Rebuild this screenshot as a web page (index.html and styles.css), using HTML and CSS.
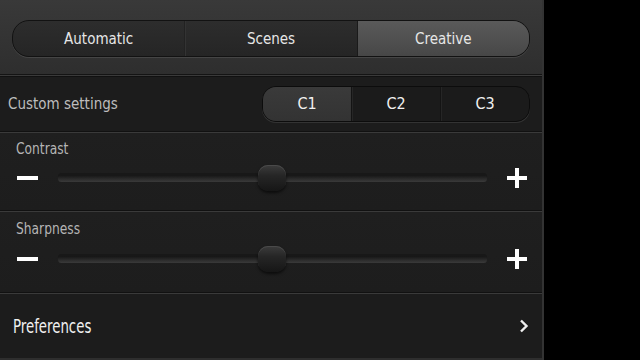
FILE: index.html
```html
<!DOCTYPE html>
<html>
<head>
<meta charset="utf-8">
<link rel="stylesheet" href="styles.css">
</head>
<body>
<div class="screen">
  <div class="panel">
    <div class="top">
      <div class="seg seg-main">
        <div class="seg-item">Automatic</div>
        <div class="seg-item">Scenes</div>
        <div class="seg-item active">Creative</div>
      </div>
    </div>
    <div class="row custom">
      <span class="label">Custom settings</span>
      <div class="seg seg-small">
        <div class="seg-item active">C1</div>
        <div class="seg-item">C2</div>
        <div class="seg-item">C3</div>
      </div>
    </div>
    <div class="slider-block first">
      <div class="slider-label"><span class="narrow">Contrast</span></div>
      <div class="slider-row">
        <span class="minus"></span>
        <div class="track"><div class="thumb" style="left:50%"></div></div>
        <span class="plus"></span>
      </div>
    </div>
    <div class="slider-block second">
      <div class="slider-label"><span class="narrow">Sharpness</span></div>
      <div class="slider-row">
        <span class="minus"></span>
        <div class="track"><div class="thumb" style="left:50%"></div></div>
        <span class="plus"></span>
      </div>
    </div>
    <div class="row pref">
      <span class="pref-label">Preferences</span>
      <svg class="chev" width="10" height="14" viewBox="0 0 10 14"><path d="M2 1.5 L7.5 7 L2 12.5" fill="none" stroke="#f0f0f0" stroke-width="2.4"/></svg>
    </div>
  </div>
  <div class="side"></div>
</div>
</body>
</html>
```
FILE: styles.css
```css
* { box-sizing: border-box; }
html, body { margin: 0; padding: 0; background: #000; }
body { font-family: "DejaVu Sans Condensed", "DejaVu Sans", sans-serif; }
.screen { display: flex; width: 640px; height: 360px; overflow: hidden; }
.panel { width: 544px; height: 360px; display: flex; flex-direction: column; background: #1d1d1d; border-right: 2px solid #333; }
.side { flex: 1; background: #000; }

.top { height: 75px; padding: 20px 12px 0 12px; background: linear-gradient(#393939, #2e2e2e); border-bottom: 1px solid #141414; }
.seg { display: flex; border-radius: 17px; overflow: hidden; border: 1px solid #121212; box-shadow: 0 1px 0 #454545; }
.seg-main { height: 37px; background: linear-gradient(#2d2d2d, #252525); }
.seg-item { flex: 1; display: flex; align-items: center; justify-content: center; color: #e6e6e6; font-size: 15px; border-left: 1px solid #222; box-shadow: inset 1px 0 0 #333; }
.seg-item:first-child { border-left: none; box-shadow: none; }
.seg-main .seg-item.active { background: linear-gradient(#5a5a5a, #474747); border-left: 1px solid #1a1a1a; box-shadow: none; }

.row { display: flex; align-items: center; justify-content: space-between; border-top: 1px solid #3a3a3a; }
.custom { height: 57px; padding: 0 12px 0 8px; background: #1c1c1c; border-bottom: 1px solid #111; box-shadow: inset 0 1px 0 #111; }
.label { color: #bdbdbd; font-size: 15px; }
.seg-small { width: 268px; height: 36px; border-radius: 14px; background: #1b1b1b; border-color: #0c0c0c; box-shadow: 0 1px 0 #333; }
.seg-small .seg-item { font-size: 16px; color: #f0f0f0; }
.seg-small .seg-item.active { background: linear-gradient(#3a3a3a, #333); border-left: none; }
.seg-small .seg-item + .seg-item { border-left: 1px solid #141414; box-shadow: inset 1px 0 0 #262626; }

.slider-block { border-top: 1px solid #3a3a3a; border-bottom: 1px solid #111; padding: 0 16px 0 16px; background: linear-gradient(#1f1f1f, #1d1d1d); }
.first { height: 79px; }
.second { height: 82px; }
.slider-label { color: #b5b5b5; font-size: 15.5px; height: 18px; line-height: 18px; }
.narrow { display: inline-block; transform: scaleX(0.88); transform-origin: left center; }
.first .slider-label { margin-top: 7px; }
.second .slider-label { margin-top: 8px; }
.slider-row { display: flex; align-items: center; height: 32px; margin-top: 4px; }
.second .slider-row { margin-top: 5px; }
.minus { width: 21px; height: 4px; background: #fff; margin-left: 1px; }
.track { flex: 1; margin: 0 20px 0 20px; height: 7px; border-radius: 4px; background: linear-gradient(#151515, #2c2c2c 60%, #3a3a3a); box-shadow: 0 -2px 0 #181818; position: relative; }
.thumb { position: absolute; top: 50%; width: 28px; height: 26px; margin-left: -15px; margin-top: -13px; border-radius: 10px; background: linear-gradient(#3c3c3c, #262626 40%, #161616); box-shadow: 0 2px 3px rgba(0,0,0,0.6), inset 0 1px 0 #4a4a4a; }
.plus { width: 20px; height: 20px; position: relative; margin-right: -1px; }
.plus::before { content: ""; position: absolute; left: 0; top: 8px; width: 20px; height: 4px; background: #fff; }
.plus::after { content: ""; position: absolute; left: 8px; top: 0; width: 4px; height: 20px; background: #fff; }

.pref { flex: 1; padding: 0 13px 0 13px; background: #1c1c1c; border-bottom: 2px solid #2e2e2e; }
.pref-label { display: inline-block; color: #f0f0f0; font-size: 19.5px; transform: scaleX(0.76); transform-origin: left center; }
.chev { display: block; }
```
